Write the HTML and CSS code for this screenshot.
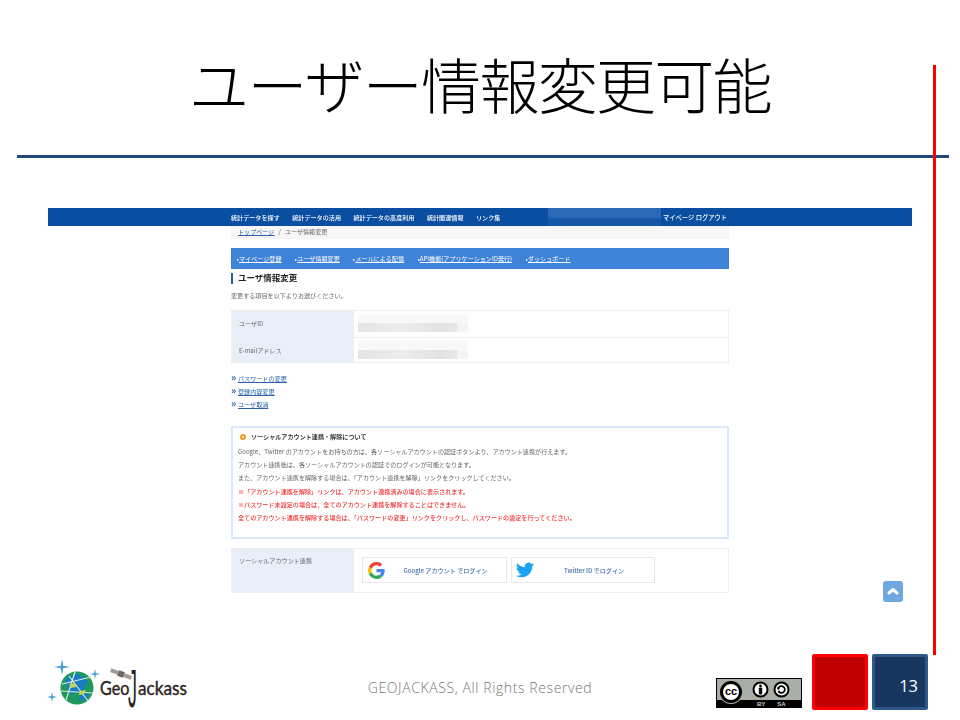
FILE: index.html
```html
<!DOCTYPE html>
<html>
	<head>
		<meta charset="UTF-8">
		<title>ユーザー情報変更可能</title>
		<link rel="stylesheet" href="styles.css">
	</head>
	<body>
		<div class="slide">
			<h1 class="slideTitle">ユーザー情報変更可能</h1>
			<div class="slideRule"></div>
			<div class="redLine"></div>

			<div class="shot">
				<div class="navBar">
					<div class="navInner">
						<span>統計データを探す</span>
						<span>統計データの活用</span>
						<span>統計データの高度利用</span>
						<span>統計関連情報</span>
						<span>リンク集</span>
						<div class="navMask"></div>
						<span class="navRight">マイページ ログアウト</span>
					</div>
				</div>
				<div class="page">
					<div class="crumb"><a>トップページ</a><i>/</i>ユーザ情報変更</div>
					<div class="tabs">
						<a>マイページ登録</a>
						<a>ユーザ情報変更</a>
						<a>メールによる配信</a>
						<a>API機能(アプリケーションID発行)</a>
						<a>ダッシュボード</a>
					</div>
					<h2 class="pageTitle">ユーザ情報変更</h2>
					<p class="lead">変更する項目を以下よりお選びください。</p>

					<div class="infoTable">
						<div class="infoRow">
							<div class="infoHead">ユーザID</div>
							<div class="infoCell"><div class="mask"></div></div>
						</div>
						<div class="infoRow">
							<div class="infoHead">E-mailアドレス</div>
							<div class="infoCell"><div class="mask"></div></div>
						</div>
					</div>

					<ul class="links">
						<li><a>パスワードの変更</a></li>
						<li><a>登録内容変更</a></li>
						<li><a>ユーザ取消</a></li>
					</ul>

					<div class="notice">
						<div class="noticeTitle"><span class="dot"></span>ソーシャルアカウント連携・解除について</div>
						<p>Google、Twitter のアカウントをお持ちの方は、各ソーシャルアカウントの認証ボタンより、アカウント連携が行えます。</p>
						<p>アカウント連携後は、各ソーシャルアカウントの認証でのログインが可能となります。</p>
						<p>また、アカウント連携を解除する場合は、「アカウント連携を解除」リンクをクリックしてください。</p>
						<p class="red">※「アカウント連携を解除」リンクは、アカウント連携済みの場合に表示されます。</p>
						<p class="red">※パスワード未設定の場合は、全てのアカウント連携を解除することはできません。</p>
						<p class="red">全てのアカウント連携を解除する場合は、「パスワードの変更」リンクをクリックし、パスワードの設定を行ってください。</p>
					</div>

					<div class="socialTable">
						<div class="socialHead">ソーシャルアカウント連携</div>
						<div class="socialCell">
							<div class="socialBtn googleBtn">
								<svg viewBox="0 0 48 48" width="17" height="17">
									<path fill="#ea4335" d="M24 9.500c3.500 0 6.700 1.200 9.200 3.600l6.900-6.900C35.900 2.400 30.500 0 24 0 14.600 0 6.500 5.400 2.600 13.200l8 6.200C12.500 13.600 17.800 9.500 24 9.500z"/>
									<path fill="#4285f4" d="M47 24.500c0-1.600-.1-3.100-.4-4.500H24v9h13c-.6 3-2.300 5.500-4.800 7.200l7.700 6C44.400 37.900 47 31.800 47 24.500z"/>
									<path fill="#fbbc05" d="M10.600 28.600C10.100 27.200 9.800 25.600 9.800 24s.3-3.200.8-4.600l-8-6.200C.9 16.500 0 20.100 0 24s.9 7.500 2.600 10.800l8-6.200z"/>
									<path fill="#34a853" d="M24 48c6.500 0 11.900-2.100 15.900-5.800l-7.700-6c-2.200 1.400-4.900 2.300-8.200 2.300-6.200 0-11.500-4.100-13.400-9.900l-8 6.200C6.500 42.600 14.600 48 24 48z"/>
								</svg>
								<span>Google アカウント でログイン</span>
							</div>
							<div class="socialBtn twitterBtn">
								<svg viewBox="0 0 24 24" width="18" height="18">
									<path fill="#1da1f2" d="M23.950 4.570a10 10 0 0 1-2.820.77 4.960 4.960 0 0 0 2.160-2.720c-.95.550-2 .96-3.130 1.190a4.920 4.920 0 0 0-8.380 4.480C7.690 8.090 4.070 6.130 1.640 3.160a4.820 4.820 0 0 0-.67 2.480c0 1.710.87 3.210 2.190 4.100a4.900 4.900 0 0 1-2.230-.61v.06a4.920 4.920 0 0 0 3.950 4.830 5 5 0 0 1-2.210.08 4.940 4.940 0 0 0 4.600 3.420A9.870 9.870 0 0 1 0 19.540a14 14 0 0 0 7.560 2.210c9.050 0 14-7.500 14-13.980 0-.21 0-.42-.02-.63a9.940 9.940 0 0 0 2.460-2.550z"/>
								</svg>
								<span>Twitter ID でログイン</span>
							</div>
						</div>
					</div>
				</div>
				<div class="toTop">
					<svg viewBox="0 0 20 20" width="20" height="20"><path fill="none" stroke="#fff" stroke-width="3" stroke-linecap="round" stroke-linejoin="round" d="M6 12l4-3.500 4 3.500"/></svg>
				</div>
			</div>

			<div class="slideFooter">
				<div class="logo">
					<svg viewBox="0 0 160 56" width="160" height="56">
						<path fill="#4f9fd6" d="M14 5l1.300 6.700L22 13l-6.700 1.300L14 21l-1.300-6.700L6 13l6.700-1.300zM47 15l.9 4.100 4.100.9-4.100.9-.9 4.100-.9-4.100-4.100-.9 4.100-.9zM4 38l.9 4.100 4.100.9-4.100.9-.9 4.100-.9-4.100L-1 43l4.100-.9z"/>
						<circle cx="29" cy="34" r="16.500" fill="#1f9a5e"/>
						<path fill="#1a7cc4" d="M17 26l12-7 11 8-6 11-13 2zM33 41l9-3-5 8-7 1z"/>
						<path fill="none" stroke="#d8ecd8" stroke-width="1.200" d="M14 30l29-7M18 46l9-28M21 22l19 25M13 37l32 2"/>
						<path fill="#c3d64e" d="M21 30l6-1 1 4-5 1zM32 37l6-1-2 4-5 1z"/>
						<g transform="rotate(20 73 20)" fill="#a39d98">
							<rect x="62" y="18" width="8" height="4"/>
							<rect x="76" y="18" width="8" height="4"/>
							<rect x="70" y="17" width="6" height="6" fill="#6d6662"/>
						</g>
						<text class="logoWord" transform="translate(52 41) scale(.85 1)">Geo</text>
						<text class="logoJ" transform="translate(80 53) scale(.33 1)">J</text>
						<text class="logoWord" x="90" y="41" textLength="49" lengthAdjust="spacingAndGlyphs">ackass</text>
					</svg>
				</div>
				<div class="copyright">GEOJACKASS, All Rights Reserved</div>
				<div class="ccBadge">
					<div class="ccIcons">
						<span class="ccMain">cc</span>
						<span class="ccSmall">
							<svg viewBox="0 0 17 17" width="17" height="17"><circle cx="8.500" cy="8.500" r="7" fill="#fff" stroke="#000" stroke-width="2"/><circle cx="8.500" cy="4.800" r="1.400"/><rect x="6.800" y="6.600" width="3.400" height="7" rx="1"/></svg>
							<svg viewBox="0 0 17 17" width="17" height="17"><circle cx="8.500" cy="8.500" r="7" fill="#fff" stroke="#000" stroke-width="2"/><path fill="none" stroke="#000" stroke-width="1.800" d="M5.400 7a3.400 3.400 0 1 1 0 3"/><path d="M3.600 6.600h3.600L5.400 9.200z"/></svg>
						</span>
					</div>
					<div class="ccLabels"><span>BY</span><span>SA</span></div>
				</div>
				<div class="boxRed"></div>
				<div class="boxNum">13</div>
			</div>
		</div>
	</body>
</html>
```

FILE: styles.css
```css
*,
*::before,
*::after{
	box-sizing: border-box;
}
html,body{
	margin: 0;
	padding: 0;
	background: #fff;
}
body{
	font-family: "Noto Sans CJK JP","Open Sans","Noto Sans",sans-serif;
}
.slide{
	width: 960px;
	height: 720px;
	position: relative;
	overflow: hidden;
	display: flex;
	flex-direction: column;
}
.slideTitle{
	margin: 0;
	height: 155px;
	padding-top: 41px;
	font-size: 60px;
	line-height: 84px;
	font-weight: 300;
	text-align: center;
	color: #000;
	letter-spacing: -1.700px;
}
.slideRule{
	height: 3px;
	margin: 0 11px 0 17px;
	background: #1f497d;
}
.redLine{
	position: absolute;
	left: 933px;
	top: 65px;
	width: 3px;
	height: 590px;
	background: #f00;
}

/* embedded screenshot */
.shot{
	margin: 50px 48px 0;
	height: 420px;
	position: relative;
	filter: blur(0.6px);
	flex: none;
}
.navBar{
	height: 18px;
	background: #0a4ea2;
	color: #fff;
	font-size: 6.100px;
	font-weight: 500;
}
.navInner{
	margin-left: 183px;
	width: 498px;
	height: 18px;
	display: flex;
	align-items: center;
	gap: 12.500px;
}
.navMask{
	width: 113px;
	height: 18px;
	margin-left: 35.500px;
	background: linear-gradient(180deg,#3f7cc2 0,#3f7cc2 55%,#1e5cac 60%,#1e5cac 100%);
	opacity: .6;
}
.navRight{
	margin-left: -11px;
	font-size: 6.300px;
	white-space: nowrap;
}
.page{
	width: 498px;
	margin-left: 183px;
	font-size: 6.100px;
	color: #666;
}
.crumb{
	height: 13px;
	line-height: 12px;
	padding-left: 7px;
	background: #f6f6f6;
}
.crumb a{
	color: #2b62a8;
	text-decoration: underline;
}
.crumb i{
	font-style: normal;
	margin: 0 4px;
}
.tabs{
	margin-top: 9px;
	height: 21px;
	padding-left: 6px;
	background: #3f83d8;
	display: flex;
	align-items: center;
	gap: 13.700px;
}
.tabs a{
	color: #fff;
	text-decoration: underline;
}
.tabs a::before{
	content: "\25B8";
	font-size: 4px;
	display: inline-block;
	text-decoration: none;
}
.pageTitle{
	margin: 4px 0 0;
	height: 11px;
	line-height: 9px;
	padding-left: 5px;
	border-left: 2px solid #1f5ea8;
	font-size: 8.500px;
	font-weight: 700;
	color: #222;
}
.lead{
	margin: 7px 0 0;
	line-height: 10px;
}
.infoTable{
	margin-top: 9px;
	border: 1px solid #eee;
}
.infoRow{
	height: 25.500px;
	display: flex;
}
.infoRow + .infoRow{
	border-top: 1px solid #eee;
}
.infoHead{
	width: 122px;
	padding-left: 7px;
	line-height: 25px;
	background: #e9eff8;
}
.infoCell{
	flex: 1;
	padding: 12px 0 0 4px;
}
.mask{
	width: 110px;
	height: 9px;
	background: linear-gradient(90deg,#e4e4e4,#ededed 40%,#e2e2e2 75%,#e8e8e8 90%,#f5f5f5 91%);
	box-shadow: 0 -9px 2px #f8f8f8;
}
.links{
	list-style: none;
	margin: 9px 0 0;
	padding: 0;
}
.links li{
	height: 13px;
	line-height: 13px;
	padding-left: 7px;
	position: relative;
}
.links li::before{
	content: "\00BB";
	position: absolute;
	left: 0;
	top: -2px;
	font-size: 10px;
	font-weight: 700;
	color: #2b62a8;
}
.links a{
	color: #2b62a8;
	text-decoration: underline;
}
.notice{
	margin-top: 15px;
	height: 113px;
	padding: 1px 5px 0;
	border: 2px solid #dbe8fa;
}
.noticeTitle{
	height: 15px;
	line-height: 15px;
	font-size: 6.100px;
	font-weight: 700;
	color: #333;
	display: flex;
	align-items: center;
	margin-bottom: 1px;
}
.dot{
	width: 6px;
	height: 6px;
	margin: 0 5px 0 2px;
	border: 2px solid #f39a1e;
	border-radius: 50%;
}
.notice p{
	margin: 0;
	line-height: 13.200px;
	white-space: nowrap;
}
.notice .red{
	color: #f03030;
	font-weight: 500;
}
.socialTable{
	margin-top: 9px;
	height: 45px;
	display: flex;
	border: 1px solid #eee;
}
.socialHead{
	width: 122px;
	padding: 4px 0 0 7px;
	line-height: 16px;
	background: #e9eff8;
}
.socialCell{
	flex: 1;
	padding: 8px 0 0 8px;
	display: flex;
	gap: 4px;
}
.socialBtn{
	height: 26px;
	border: 1px solid #e8e8e8;
	display: flex;
	align-items: center;
	color: #3f6ea8;
	font-weight: 500;
}
.socialBtn svg{
	flex: none;
	margin-left: 5px;
}
.socialBtn span{
	flex: 1;
	text-align: center;
	white-space: nowrap;
}
.googleBtn{
	width: 145px;
}
.twitterBtn{
	width: 144px;
}
.twitterBtn svg{
	margin-left: 4px;
}
.toTop{
	position: absolute;
	left: 835px;
	top: 373px;
	width: 20px;
	height: 21px;
	border-radius: 3px;
	background: #6fa8e0;
}
.toTop svg{
	display: block;
}

/* footer */
.slideFooter{
	margin-top: 26px;
	height: 56px;
	display: flex;
	position: relative;
}
.logo{
	width: 160px;
	margin-left: 48px;
}
.logo svg{
	display: block;
	overflow: visible;
}
.logoWord{
	font-family: "Lato",sans-serif;
	font-size: 19px;
	fill: #2b2320;
	stroke: #2b2320;
	stroke-width: .4px;
}
.logoJ{
	font-family: "Liberation Sans",sans-serif;
	font-size: 54px;
	fill: #2b2320;
}
.copyright{
	width: 226px;
	margin-left: 159px;
	padding-top: 24px;
	font-family: "Open Sans",sans-serif;
	font-size: 14px;
	font-weight: 300;
	line-height: 20px;
	letter-spacing: .6px;
	color: #777;
	text-align: center;
	white-space: nowrap;
}
.ccBadge{
	width: 86px;
	height: 30px;
	margin: 24px 0 0 123px;
	background: #a9afa6;
	border: 1px solid #000;
	display: flex;
	flex-direction: column;
	position: relative;
}
.ccIcons{
	height: 21px;
	display: flex;
	align-items: flex-start;
	padding: 2px 0 0 3px;
}
.ccMain{
	width: 22px;
	height: 22px;
	flex: none;
	position: relative;
	z-index: 1;
	border: 3px solid #000;
	border-radius: 50%;
	background: #fff;
	box-shadow: 0 0 0 1px #a9afa6;
	font-family: "Liberation Sans",sans-serif;
	font-size: 11px;
	font-weight: 700;
	line-height: 14px;
	text-align: center;
	color: #000;
}
.ccSmall{
	margin: 0 0 0 10px;
	display: flex;
	gap: 4px;
}
.ccLabels{
	flex: 1;
	background: #000;
	color: #ccc;
	font-family: "Liberation Sans",sans-serif;
	font-size: 6px;
	font-weight: 700;
	line-height: 8px;
	padding-left: 40px;
	display: flex;
	gap: 12px;
}
.boxRed{
	width: 56px;
	height: 56px;
	margin-left: 10px;
	background: #c00000;
	border: 3px solid #f00;
	border-radius: 2px;
}
.boxNum{
	width: 56px;
	height: 56px;
	margin-left: 4px;
	padding: 0 7px 0 0;
	background: #17375e;
	border: 3px solid #2f5787;
	border-radius: 2px;
	color: #fff;
	font-family: "Open Sans",sans-serif;
	font-size: 16.500px;
	line-height: 58px;
	text-align: right;
}
```
